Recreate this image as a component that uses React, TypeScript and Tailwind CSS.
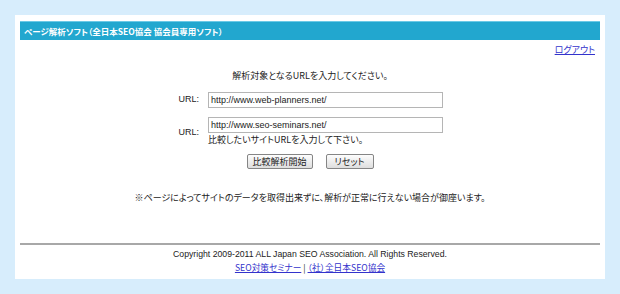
import React, { useState } from "react";

const jp = "font-['Noto_Sans_CJK_JP',sans-serif]";

export default function App() {
  const [url1, setUrl1] = useState("http://www.web-planners.net/");
  const [url2, setUrl2] = useState("http://www.seo-seminars.net/");

  return (
    <div className={`min-h-[294px] bg-[#d7edfc] px-[15px] pt-[15px] text-[#222] ${jp}`}>
      <div className="w-[590px] h-[264px] bg-white px-[5px] pt-[6px]">
        <div className="h-[19px] bg-[#22a7cf] border-t border-[#6cc9e6] pl-[4px] text-white text-[8.5px] font-bold leading-[18px] [font-feature-settings:'palt']">
          ページ解析ソフト（全日本SEO協会 協会員専用ソフト）
        </div>
        <div className="text-right pr-[5px] mt-[1px] leading-[11px]">
          <a href="#" className="text-[9px] text-[#3333cc] underline [font-feature-settings:'palt']">ログアウト</a>
        </div>

        <form onSubmit={e => e.preventDefault()} className="[font-feature-settings:'palt'] text-[9px]">
          <p className="text-center mt-[15px] leading-[12px]">解析対象となるURLを入力してください。</p>

          <div className="flex justify-center items-center gap-[9px] mt-[10px]">
            <label className="w-[22px] text-right font-['Liberation_Sans',sans-serif] text-[9px]">URL:</label>
            <input
              type="text"
              value={url1}
              onChange={e => setUrl1(e.target.value)}
              className="w-[235px] h-[16px] border border-[#b5b5b5] px-[2px] text-[9px] font-['Liberation_Sans',sans-serif] outline-none"
            />
          </div>

          <div className="flex justify-center items-center gap-[9px] mt-[9px]">
            <label className="w-[22px] text-right font-['Liberation_Sans',sans-serif] text-[9px] mt-[2px]">URL:</label>
            <div className="w-[235px]">
              <input
                type="text"
                value={url2}
                onChange={e => setUrl2(e.target.value)}
                className="w-[235px] h-[16px] border border-[#b5b5b5] px-[2px] text-[9px] font-['Liberation_Sans',sans-serif] outline-none"
              />
              <div className="leading-[13px]">比較したいサイトURLを入力して下さい。</div>
            </div>
          </div>

          <div className="flex justify-center gap-[13px] mt-[8px]">
            <button type="submit" className="w-[66px] h-[15px] border border-[#858585] rounded-[2px] bg-gradient-to-b from-[#fdfdfd] to-[#dedede] text-[9px] leading-[13px]">
              比較解析開始
            </button>
            <button type="reset" className="w-[48px] h-[15px] border border-[#858585] rounded-[2px] bg-gradient-to-b from-[#fdfdfd] to-[#dedede] text-[9px] leading-[13px]">
              リセット
            </button>
          </div>

          <p className="text-center mt-[23px] leading-[12px]">
            ※ページによってサイトのデータを取得出来ずに、解析が正常に行えない場合が御座います。
          </p>
        </form>

        <div className="mt-[39px] border-t-2 border-[#a8a8a8]" />
        <div className="text-center text-[8.7px] mt-[3px] leading-[12px] [font-feature-settings:'palt']">
          <div className="font-['Liberation_Sans',sans-serif]">Copyright 2009-2011 ALL Japan SEO Association. All Rights Reserved.</div>
          <div className="mt-[2px]">
            <a href="#" className="text-[#3333cc] underline">SEO対策セミナー</a>
            <span> | </span>
            <a href="#" className="text-[#3333cc] underline">（社）全日本SEO協会</a>
          </div>
        </div>
      </div>
    </div>
  );
}
